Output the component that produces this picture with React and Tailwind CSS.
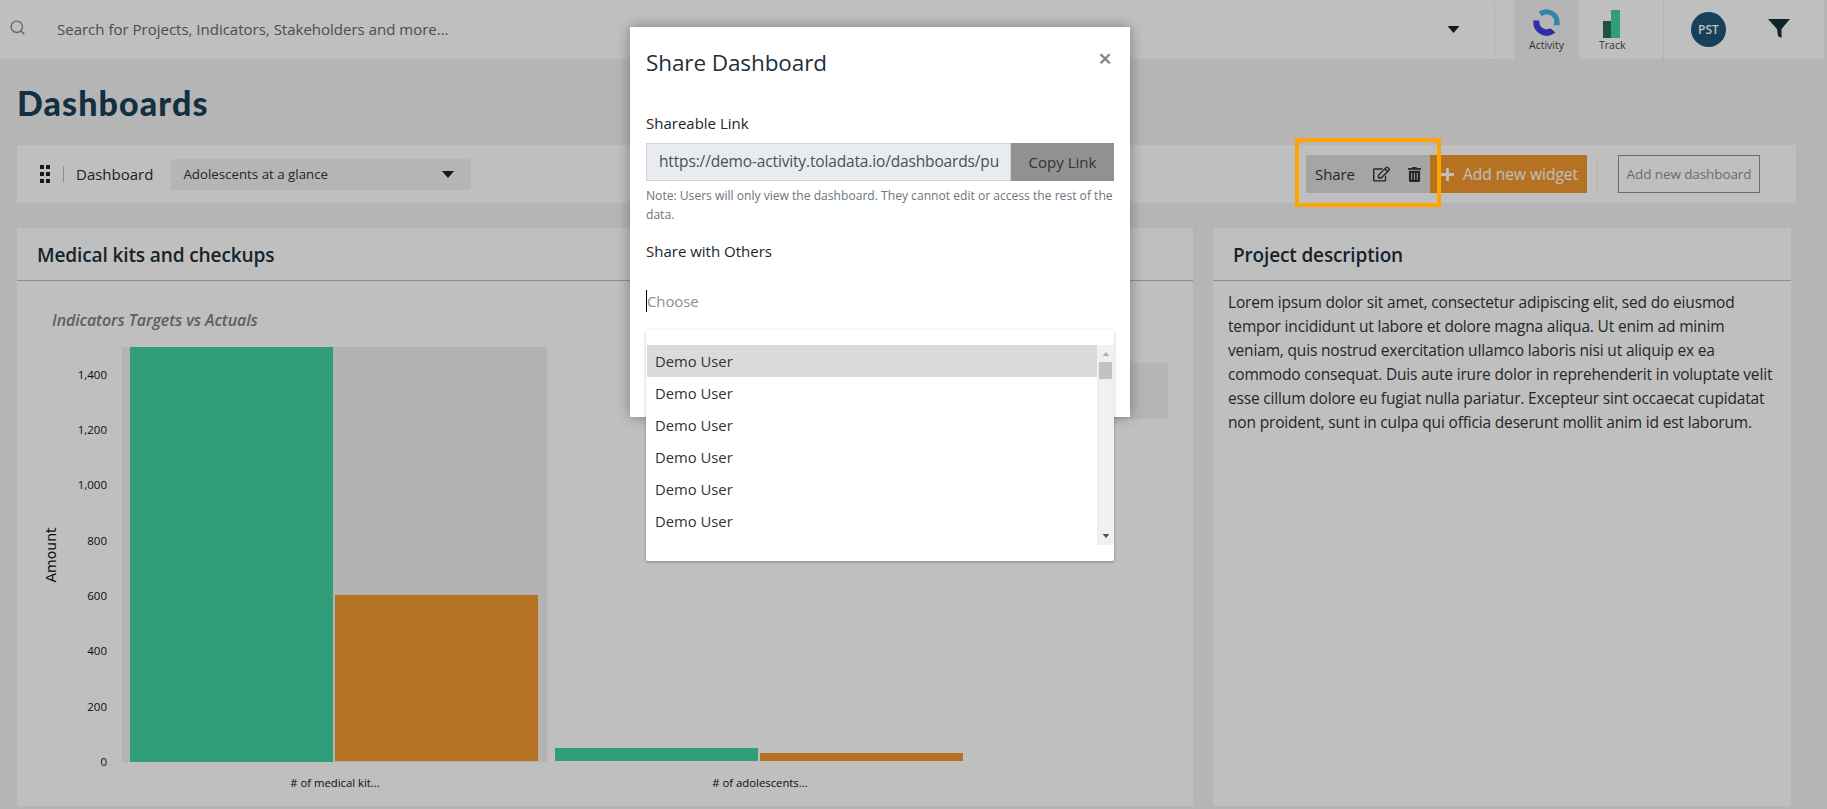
import React from "react";
import { FaRegEdit, FaTrashAlt, FaPlus } from "react-icons/fa";
import { FiSearch } from "react-icons/fi";

const Caret = ({ className }) => (
  <svg viewBox="0 0 12 7" className={className}><polygon points="0,0 12,0 6,7" fill="currentColor" /></svg>
);

function ActivityLogo() {
  return (
    <svg viewBox="0 0 27 27" className="w-[27px] h-[27px]">
      <path d="M5.5 2.8 A13.5 13.5 0 0 1 26.5 16.2 L20.5 16.2 A7.5 7.5 0 0 0 8.8 7.2 Z" fill="#3fb0e6" />
      <path d="M0.5 11.2 A13.5 13.5 0 0 0 22.4 23.6 L17.4 19.3 A7.3 7.3 0 0 1 6.5 11.8 Z" fill="#3c3cdc" />
    </svg>
  );
}

function TrackLogo() {
  return (
    <svg viewBox="0 0 17 28" className="w-[17px] h-[28px]">
      <rect x="0" y="11" width="8" height="17" fill="#286f5a" />
      <rect x="8" y="0" width="9" height="28" fill="#41d3a0" />
    </svg>
  );
}

function Chart() {
  const ticks = [["1,400", 375], ["1,200", 430], ["1,000", 485], ["800", 541], ["600", 596], ["400", 651], ["200", 707], ["0", 762]];
  const oy = 340;
  return (
    <svg width="1176" height="466" className="block" style={{ fontFamily: "'Open Sans', sans-serif" }}>
      <rect x="105" y={347 - oy} width="425" height="415" fill="#efefef" />
      <rect x="113" y={347 - oy} width="203" height="415" fill="#41d3a0" />
      <rect x="318" y={595 - oy} width="203" height="166" fill="#f3982f" />
      <rect x="538" y={748 - oy} width="203" height="13" fill="#41d3a0" />
      <rect x="743" y={753 - oy} width="203" height="8" fill="#f3982f" />
      {ticks.map(([t, y]) => (
        <text key={t} x="90" y={y - oy + 4} textAnchor="end" fontSize="11.5" fill="#111">{t}</text>
      ))}
      <text transform={`translate(39,${555 - oy}) rotate(-90)`} textAnchor="middle" fontSize="14" fill="#111" style={{ fontFamily: "'DejaVu Sans', sans-serif" }}>Amount</text>
      <text x="318" y={787 - oy} textAnchor="middle" fontSize="11.3" fill="#111">{"# of medical kit..."}</text>
      <text x="743" y={787 - oy} textAnchor="middle" fontSize="11.3" fill="#111">{"# of adolescents..."}</text>
    </svg>
  );
}

function TopBar() {
  return (
    <header className="h-[59px] w-[1824px] bg-white flex items-stretch">
      <div className="flex-1 flex items-center relative">
        <FiSearch className="ml-[9px] mb-[5px] w-[17px] h-[17px] text-[#8a8a8a]" />
        <span className="ml-[31px] text-[15px] text-[#5f6770]">Search for Projects, Indicators, Stakeholders and more...</span>
        <Caret className="w-[13px] h-[7px] ml-auto mr-[34px] text-[#222]" />
      </div>
      <div className="w-[20px] border-l border-[#ededed] my-[2px]" />
      <div className="w-[65px] bg-[#f2f2f2] flex flex-col items-center pt-[9px]">
        <ActivityLogo />
        <span className="text-[10.5px] leading-[14px] text-[#444] mt-[2px]">Activity</span>
      </div>
      <div className="w-[85px] border-r border-[#ededed] flex flex-col pl-[24px] pt-[10px]">
        <TrackLogo />
        <span className="text-[10.5px] leading-[14px] text-[#444] -ml-[4px]">Track</span>
      </div>
      <div className="w-[160px] flex items-center">
        <div className="ml-[27px] w-[35px] h-[35px] rounded-full bg-[#1f5678] text-white text-[12px] font-semibold flex items-center justify-center">PST</div>
        <svg viewBox="0 0 22 19" className="ml-[42px] mb-[2px] w-[22px] h-[19px] text-[#17303c]">
          <polygon points="0,0 22,0 13.5,10 13.5,19 10,17 9,10" fill="currentColor" />
        </svg>
      </div>
    </header>
  );
}

function Toolbar() {
  return (
    <div className="mt-[22px] h-[58px] w-[1779px] bg-white flex items-center">
      <div className="ml-[23px] grid grid-cols-2 gap-x-[2px] gap-y-[3px] w-[10px]">
        {[0, 1, 2, 3, 4, 5].map((i) => <span key={i} className="w-[4px] h-[4px] bg-[#222]" />)}
      </div>
      <div className="ml-[13px] h-[16px] border-l border-[#bdbdbd]" />
      <span className="ml-[12px] pt-[1px] text-[15px] font-medium text-[#1c2f3a]">Dashboard</span>
      <div className="ml-[18px] w-[300px] h-[31px] rounded-[3px] bg-[#f2f2f2] flex items-center px-[12px]">
        <span className="pt-[1px] text-[13.3px] text-[#333]">Adolescents at a glance</span>
        <Caret className="ml-auto mr-[5px] w-[12px] h-[7px] text-[#222]" />
      </div>
      <div className="ml-auto flex items-stretch h-[38px] mr-[36px]">
        <div className="w-[124px] bg-[#dddddd] flex items-center pl-[9px] text-[#333]">
          <span className="text-[15px] tracking-[-0.1px]">Share</span>
          <FaRegEdit className="ml-[18px] w-[17px] h-[16px]" />
          <FaTrashAlt className="ml-[18px] w-[13px] h-[15px]" />
        </div>
        <div className="w-[157px] bg-[#f3982f] text-white flex items-center pl-[10px]">
          <FaPlus className="w-[15px] h-[15px]" />
          <span className="ml-[8px] pt-[1px] text-[15.5px]">Add new widget</span>
        </div>
        <div className="ml-[10px] border-l border-[#ededed] my-[2px]" />
        <div className="ml-[20px] w-[142px] border border-[#8f8f9c] flex items-center justify-center pt-[1px]">
          <span className="text-[13.5px] tracking-[-0.1px] text-[#8f8f9c]">Add new dashboard</span>
        </div>
      </div>
    </div>
  );
}

function Panels() {
  return (
    <div className="mt-[25px] flex gap-[20px]">
      <section className="relative w-[1176px] h-[578px] bg-white">
        <div className="h-[53px] border-b border-[#bdbdbd] flex items-center pl-[20px] pt-[2px]">
          <h2 className="text-[19.1px] font-semibold text-[#1c2f3a] tracking-[-0.15px]">Medical kits and checkups</h2>
        </div>
        <p className="pl-[35px] pt-[29px] h-[60px] text-[16px] leading-[20px] font-semibold italic text-[#7c7f87] tracking-[-0.1px]">Indicators Targets vs Actuals</p>
        <div className="absolute left-[700px] right-[25px] top-[135px] h-[56px] rounded-[3px] bg-[#f2f2f2]" />
        <div className="-mt-[1px]"><Chart /></div>
      </section>
      <section className="w-[578px] h-[578px] bg-white">
        <div className="h-[53px] border-b border-[#bdbdbd] flex items-center pl-[20px] pt-[2px]">
          <h2 className="text-[19px] font-semibold text-[#1c2f3a] tracking-[-0.15px]">Project description</h2>
        </div>
        <p className="pl-[15px] pr-[16px] pt-[9px] text-[15.5px] leading-[24px] text-[#333] tracking-[-0.17px]">
          Lorem ipsum dolor sit amet, consectetur adipiscing elit, sed do eiusmod tempor incididunt ut labore et dolore magna aliqua. Ut enim ad minim veniam, quis nostrud exercitation ullamco laboris nisi ut aliquip ex ea commodo consequat. Duis aute irure dolor in reprehenderit in voluptate velit esse cillum dolore eu fugiat nulla pariatur. Excepteur sint occaecat cupidatat non proident, sunt in culpa qui officia deserunt mollit anim id est laborum.
        </p>
      </section>
    </div>
  );
}

function Modal() {
  return (
    <div className="absolute left-[630px] top-[27px] w-[500px] h-[390px] bg-white shadow-[0_0_12px_rgba(0,0,0,0.35)] px-[16px] text-[#212529]">
      <div className="flex items-start">
        <h3 className="pt-[19px] text-[22.5px] leading-[34px] text-[#1f2f3a] tracking-[-0.1px]">Share Dashboard</h3>
        <span className="ml-auto mt-[16px] mr-[2px] text-[24px] leading-[30px] font-semibold text-[#808080]">×</span>
      </div>
      <p className="mt-[31px] text-[15px] leading-[24px]">Shareable Link</p>
      <div className="mt-[8px] flex h-[38px]">
        <div className="w-[365px] bg-[#e9ecef] border border-[#ced4da] flex items-center pl-[12px] overflow-hidden whitespace-nowrap">
          <span className="text-[15.5px] text-[#495057] tracking-[-0.15px]">https://demo-activity.toladata.io/dashboards/pu</span>
        </div>
        <div className="w-[103px] bg-[#919191] flex items-center justify-center">
          <span className="text-[15px] text-[#333]">Copy Link</span>
        </div>
      </div>
      <p className="mt-[5px] text-[12.1px] leading-[19px] text-[#6c757d]">Note: Users will only view the dashboard. They cannot edit or access the rest of the data.</p>
      <p className="mt-[15px] text-[15px] leading-[24px]">Share with Others</p>
      <div className="mt-[27px] flex items-center h-[22px] border-l border-black">
        <span className="text-[15px] text-[#8a8f94] tracking-[-0.1px]">Choose</span>
      </div>
    </div>
  );
}

function UserList() {
  return (
    <div className="absolute left-[646px] top-[330px] w-[468px] h-[231px] bg-white rounded-[2px] shadow-[0_1px_3px_rgba(0,0,0,0.3)] pt-[15px] pl-[1px]">
      <div className="flex h-[200px]">
        <ul className="flex-1">
          {[0, 1, 2, 3, 4, 5].map((i) => (
            <li key={i} className={`h-[32px] flex items-center pl-[8px] pt-[1px] text-[14.8px] text-[#333] ${i === 0 ? "bg-[#dbdbdb]" : ""}`}>Demo User</li>
          ))}
        </ul>
        <div className="w-[17px] bg-[#f0f0f0] flex flex-col items-center pt-[7px]">
          <Caret className="w-[8px] h-[4px] rotate-180 text-[#b0b0b0]" />
          <div className="mt-[6px] w-[13px] h-[17px] bg-[#c1c1c1]" />
          <Caret className="mt-auto mb-[7px] w-[8px] h-[4px] text-[#505050]" />
        </div>
      </div>
    </div>
  );
}

export default function App() {
  return (
    <div className="relative h-[809px] overflow-hidden bg-[#f2f2f2]" style={{ fontFamily: "'Open Sans', 'Noto Sans', sans-serif" }}>
      <TopBar />
      <main className="pl-[17px]">
        <h1 className="pt-[24px] h-[64px] text-[34px] leading-[40px] font-black tracking-[1.1px] text-[#184054]" style={{ fontFamily: "Lato, sans-serif" }}>Dashboards</h1>
        <Toolbar />
        <Panels />
      </main>
      <div className="absolute inset-0 bg-black/25" />
      <div className="absolute left-[1295px] top-[138px] w-[146px] h-[69px] border-4 border-[#ffa500]" />
      <Modal />
      <UserList />
    </div>
  );
}
